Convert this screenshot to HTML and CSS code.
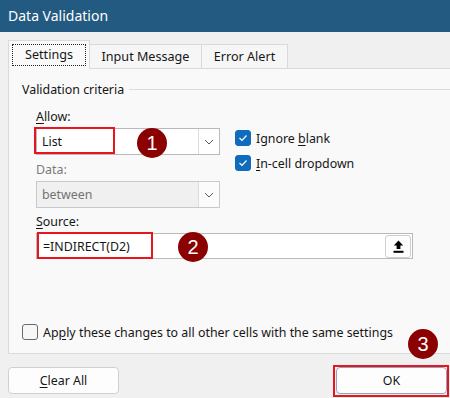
FILE: index.html
```html
<!DOCTYPE html>
<html>
<head>
<meta charset="utf-8">
<link rel="stylesheet" href="styles.css">
</head>
<body>
<div class="dialog">
  <div class="titlebar">Data Validation</div>
  <div class="tabs">
    <div class="tab active"><span class="focus">Settings</span></div>
    <div class="tab">Input Message</div>
    <div class="tab">Error Alert</div>
  </div>
  <div class="panel">
    <div class="group-head"><span>Validation criteria</span><span class="rule"></span></div>
    <div class="group">
      <div class="row-top">
        <div class="col-left">
          <div class="label"><u>A</u>llow:</div>
          <div class="combo">
            <span class="value">List</span>
            <span class="drop"><svg width="10" height="6" viewBox="0 0 10 6"><path d="M1 1 L5 5 L9 1" fill="none" stroke="#5a5a5a" stroke-width="1"/></svg></span>
          </div>
          <div class="label dim">Data:</div>
          <div class="combo disabled">
            <span class="value">between</span>
            <span class="drop"><svg width="10" height="6" viewBox="0 0 10 6"><path d="M1 1 L5 5 L9 1" fill="none" stroke="#5a5a5a" stroke-width="1"/></svg></span>
          </div>
        </div>
        <div class="checks">
          <div class="check"><span class="box on"><svg width="10" height="8" viewBox="0 0 10 8"><path d="M1.5 4 L4 6.5 L8.5 1.5" fill="none" stroke="#fff" stroke-width="1.2"/></svg></span><span>Ignore <u>b</u>lank</span></div>
          <div class="check"><span class="box on"><svg width="10" height="8" viewBox="0 0 10 8"><path d="M1.5 4 L4 6.5 L8.5 1.5" fill="none" stroke="#fff" stroke-width="1.2"/></svg></span><span><u>I</u>n-cell dropdown</span></div>
        </div>
      </div>
      <div class="label source-label"><u>S</u>ource:</div>
      <div class="source">
        <span class="value">=INDIRECT(D2)</span>
        <span class="upload"><svg width="11" height="13" viewBox="0 0 11 13"><path d="M5.5 0.5 L0.8 5.5 L3.6 5.5 L3.6 9 L7.4 9 L7.4 5.5 L10.2 5.5 Z" fill="#000"/><rect x="0.5" y="10.8" width="10" height="2" fill="#000"/></svg></span>
      </div>
    </div>
    <div class="apply"><span class="box"></span><span>Ap<u>p</u>ly these changes to all other cells with the same settings</span></div>
  </div>
  <div class="footer">
    <div class="btn"><u>C</u>lear All</div>
    <div class="btn default">OK</div>
  </div>

  <div class="mark m1"></div>
  <div class="mark m2"></div>
  <div class="mark m3"></div>
  <div class="num n1">1</div>
  <div class="num n2">2</div>
  <div class="num n3">3</div>
</div>
</body>
</html>
```

FILE: styles.css
```css
* { box-sizing: border-box; }
html, body { margin: 0; padding: 0; }
body {
  width: 450px;
  height: 398px;
  overflow: hidden;
  background: #f0f0f0;
  font-family: "Noto Sans", "DejaVu Sans", sans-serif;
  font-size: 12.4px;
  color: #161616;
}
.dialog {
  position: relative;
  width: 450px;
  height: 398px;
}
u { text-decoration: underline; text-underline-offset: 2px; }

.titlebar {
  height: 32px;
  background: #235a81;
  color: #ffffff;
  font-size: 14px;
  line-height: 32px;
  padding-left: 8px;
}

.tabs {
  display: flex;
  align-items: flex-end;
  margin-top: 9px;
  height: 27px;
  padding-left: 8px;
}
.tab {
  height: 24px;
  border: 1px solid #dadada;
  border-bottom: none;
  border-left: none;
  background: #f6f6f6;
  line-height: 23px;
  font-size: 12.6px;
  text-align: center;
}
.tab:nth-child(2) { width: 112px; }
.tab:nth-child(3) { width: 86px; }
.tab.active {
  width: 82px;
  height: 29px;
  margin-bottom: -1px;
  border-left: 1px solid #dadada;
  background: #f9f9f9;
  position: relative;
  z-index: 1;
  padding: 3px 3px 0 3px;
  line-height: 19px;
}
.focus {
  display: block;
  height: 22px;
  border: 1px dotted #222;
  line-height: 19px;
}

.panel {
  margin-left: 8px;
  height: 286px;
  border: 1px solid #dadada;
  border-right: none;
  background: #f9f9f9;
  display: flex;
  flex-direction: column;
}
.group-head {
  display: flex;
  align-items: center;
  margin-top: 13px;
  padding-left: 13px;
  height: 16px;
  line-height: 16px;
}
.group-head .rule {
  flex: 1;
  height: 1px;
  background: #dcdcdc;
  margin-left: 5px;
  margin-top: -1px;
}
.group {
  padding-left: 27px;
}
.label {
  height: 16px;
  line-height: 16px;
  margin-top: 11px;
}
.label.dim { color: #7a7a7a; margin-top: 7px; }
.source-label { margin-top: 6px; }

.row-top { display: flex; }
.col-left { width: 184px; }
.combo {
  position: relative;
  margin-top: 3px;
  height: 27px;
  border: 1px solid #bababa;
  background: #ffffff;
  display: flex;
  align-items: center;
}
.combo.disabled { background: #f0f0f0; border-color: #c9c9c9; }
.combo.disabled .value { color: #737373; }
.value { padding-left: 5px; flex: 1; }
.source .value { padding-left: 6px; }
.drop {
  width: 21px;
  height: 25px;
  border-left: 1px solid #dcdcdc;
  background: #ffffff;
  display: flex;
  align-items: center;
  justify-content: center;
}
.combo.disabled .drop { background: #fbfbfb; }

.checks {
  margin-left: 15px;
  margin-top: 32px;
  display: flex;
  flex-direction: column;
  gap: 9px;
}
.check {
  display: flex;
  align-items: center;
  gap: 5px;
  height: 16px;
}
.box {
  width: 16px;
  height: 16px;
  border-radius: 3px;
  border: 1px solid #6a6a6a;
  background: #f7f7f7;
  display: flex;
  align-items: center;
  justify-content: center;
  flex: none;
}
.box.on { background: #0f6cbd; border-color: #0f6cbd; }

.source {
  margin-top: 3px;
  width: 377px;
  height: 26px;
  border: 1px solid #bababa;
  background: #ffffff;
  display: flex;
  align-items: center;
}
.upload {
  width: 26px;
  height: 23px;
  margin-right: 1px;
  border: 1px solid #cfcfcf;
  border-radius: 3px;
  background: #fdfdfd;
  display: flex;
  align-items: center;
  justify-content: center;
}

.apply {
  margin-top: auto;
  margin-bottom: 13px;
  padding-left: 13px;
  display: flex;
  align-items: center;
  gap: 5px;
  height: 16px;
}

.footer {
  display: flex;
  justify-content: space-between;
  padding: 13px 3px 0 8px;
}
.btn {
  width: 111px;
  height: 27px;
  border: 1px solid #d0d0d0;
  border-radius: 4px;
  background: #fdfdfd;
  text-align: center;
  line-height: 25px;
}
.btn.default { border-color: #8aa6c4; }

.mark {
  position: absolute;
  border: 2px solid #e8141e;
}
.m1 { left: 34px; top: 127px; width: 81px; height: 27px; }
.m2 { left: 37px; top: 232px; width: 116px; height: 27px; }
.m3 { left: 333px; top: 365px; width: 116px; height: 32px; }

.num {
  position: absolute;
  width: 30px;
  height: 30px;
  border-radius: 50%;
  background: #8b0000;
  color: #ffffff;
  font-family: "Liberation Sans", Arial, sans-serif;
  font-size: 20px;
  line-height: 30px;
  text-align: center;
}
.n1 { left: 137px; top: 128px; }
.n2 { left: 178px; top: 232px; }
.n3 { left: 408px; top: 329px; }
```
